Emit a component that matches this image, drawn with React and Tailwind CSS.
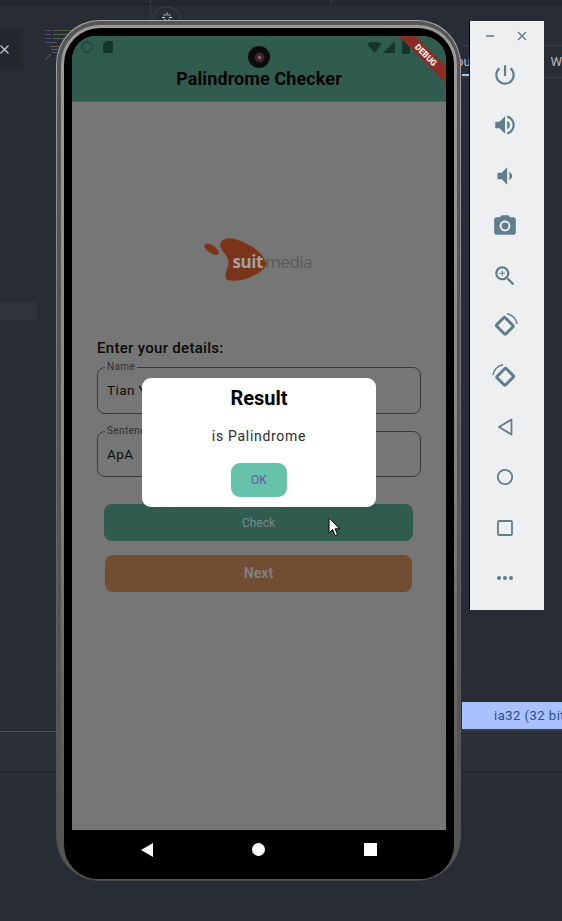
const ic = "#607d8b";

function Mat({ d, size = 26, children }) {
  return (
    <svg width={size} height={size} viewBox="0 0 24 24" fill={ic}>
      {d && <path d={d} fillRule="evenodd" />}
      {children}
    </svg>
  );
}

function Rotate({ flip }) {
  return (
    <svg width="26" height="26" viewBox="0 0 26 26" fill="none" stroke={ic} className={flip ? "-scale-x-100" : ""}>
      <rect x="6.2" y="7" width="13" height="12" rx="1.2" strokeWidth="3" transform="rotate(45 13 13)" />
      <path d="M15 0.8 A 12 12 0 0 1 25 11" strokeWidth="1.5" />
    </svg>
  );
}

function Toolbar() {
  return (
    <div className="absolute left-[469px] top-[21px] w-[75px] h-[589px] bg-[#eeeff0] flex flex-col items-center border-l border-black">
      <div className="w-full h-[30px] flex items-center justify-between pl-[16px] pr-[17px] shrink-0">
        <div className="w-[8px] h-[1.5px] bg-[#7f9aa6]" />
        <svg width="10" height="10" viewBox="0 0 10 10" stroke={ic} strokeWidth="1.4"><path d="M1 1l8 8M9 1l-8 8" /></svg>
      </div>
      <div className="flex flex-col items-center gap-[24.3px] pt-[11px] pr-[4px]">
        <Mat d="M13 3h-2v10h2V3zm4.83 2.17l-1.42 1.42C17.99 7.86 19 9.81 19 12c0 3.87-3.13 7-7 7s-7-3.13-7-7c0-2.19 1.01-4.14 2.58-5.42L6.17 5.17C4.23 6.82 3 9.26 3 12c0 4.97 4.03 9 9 9s9-4.03 9-9c0-2.74-1.23-5.18-3.17-6.83z" />
        <Mat d="M3 9v6h4l5 5V4L7 9H3zm13.5 3c0-1.77-1.02-3.29-2.5-4.03v8.05c1.48-.73 2.5-2.25 2.5-4.02zM14 3.23v2.06c2.89.86 5 3.54 5 6.71s-2.11 5.85-5 6.71v2.06c4.01-.91 7-4.49 7-8.77s-2.99-7.86-7-8.77z" />
        <Mat d="M18.5 12c0-1.77-1.02-3.29-2.5-4.03v8.05c1.48-.73 2.5-2.25 2.5-4.02zM5 9v6h4l5 5V4L9 9H5z" />
        <Mat d="M9 2L7.17 4H4c-1.1 0-2 .9-2 2v12c0 1.1.9 2 2 2h16c1.1 0 2-.9 2-2V6c0-1.1-.9-2-2-2h-3.17L15 2H9zm3 15c-2.76 0-5-2.24-5-5s2.24-5 5-5 5 2.24 5 5-2.24 5-5 5z">
          <circle cx="12" cy="12" r="3.2" />
        </Mat>
        <Mat d="M15.5 14h-.79l-.28-.27C15.41 12.59 16 11.11 16 9.5 16 5.91 13.09 3 9.5 3S3 5.91 3 9.5 5.91 16 9.5 16c1.61 0 3.09-.59 4.23-1.57l.27.28v.79l5 4.99L20.49 19l-4.99-5zm-6 0C7.01 14 5 11.99 5 9.5S7.01 5 9.5 5 14 7.01 14 9.5 11.99 14 9.5 14z">
          <path d="M12 10h-2v2H9v-2H7V9h2V7h1v2h2v1z" />
        </Mat>
        <Rotate />
        <Rotate flip />
        <svg width="26" height="26" viewBox="0 0 26 26" fill="none" stroke={ic} strokeWidth="1.8" strokeLinejoin="round"><path d="M19.5 5.5v15L7 13z" /></svg>
        <svg width="26" height="26" viewBox="0 0 26 26" fill="none" stroke={ic} strokeWidth="1.8"><circle cx="13" cy="13" r="7.2" /></svg>
        <svg width="26" height="26" viewBox="0 0 26 26" fill="none" stroke={ic} strokeWidth="1.8"><rect x="6" y="6" width="14" height="14" rx="1" /></svg>
        <svg width="26" height="26" viewBox="0 0 26 26" fill={ic}><circle cx="7" cy="13" r="2" /><circle cx="13" cy="13" r="2" /><circle cx="19" cy="13" r="2" /></svg>
      </div>
    </div>
  );
}

function Backdrop() {
  return (
    <div className="flex h-[921px] w-[562px] overflow-hidden bg-[#282c34]">
      <div className="w-[462px] flex flex-col shrink-0">
        <div className="h-[5px] bg-[#24282f] border-b border-[#1f2329] flex shrink-0">
          <div className="w-[151px] border-r border-[#3c4047]" />
          <div className="w-[181px] border-r border-[#3c4047]" />
        </div>
        <div className="flex h-[297px] shrink-0">
          <div className="w-[151px] border-r border-[#343841] h-[25px]" />
        </div>
        <div className="w-[37px] h-[18px] bg-[#2f333d] shrink-0" />
        <div className="h-[412px] shrink-0 border-b border-[#4a4e55]" />
        <div className="h-[40px] bg-[#2b2f37] border-b border-[#1f2329] shrink-0" />
      </div>
      <div className="flex-1 min-w-0 flex flex-col">
        <div className="h-[5px] bg-[#24282f] border-b border-[#1f2329] shrink-0" />
        <div className="h-[41px] shrink-0 border-b border-[#3a3e46]" />
        <div className="h-[32px] shrink-0 border-b border-[#3a3e46] flex items-center justify-between font-['Roboto',sans-serif] text-[13px] text-[#b9bcc1] relative">
          <span className="-ml-[6px]">ou</span>
          <span>W</span>
          <div className="absolute left-0 bottom-[1px] w-[10px] h-[2px] bg-[#a9c1ff]" />
        </div>
        <div className="h-[624px] shrink-0" />
        <div className="h-[28px] bg-[#a9c1ff] shrink-0 border-b border-[#3a3e46] flex items-center pl-[32px] font-['Roboto',sans-serif] text-[13px] tracking-[0.5px] text-[#2c4f86] whitespace-nowrap overflow-hidden">
          ia32 (32 bit)
        </div>
        <div className="h-[42px] bg-[#2b2f37] border-b border-[#1f2329] border-t border-t-[#3a3e46] shrink-0" />
      </div>
    </div>
  );
}

function Logo() {
  return (
    <div className="relative w-[112px] h-[46px]">
      <svg width="112" height="46" viewBox="0 0 112 46" className="absolute left-0 top-0">
        <path d="M17 4 C20 0 27 -1 34 2 C47 7 58 13 62 25 C63 29 58 33 53 36 C44 41 33 44 24 42 C21 41 21 37 23 31 C26 24 24 19 20 15 C17 11 15 7 17 4Z" fill="#7a3417" />
        <path d="M0.5 7.5 C1 5 6 5.5 10 8 C14 11 16 15 14 16.5 C11 18 6 15 3 12.5 C1 11 0 9 0.5 7.5Z" fill="#7a3417" />
      </svg>
      <div className="absolute left-[29px] top-[12px] flex items-baseline whitespace-nowrap font-['Open_Sans',sans-serif] text-[17px] leading-[24px]">
        <span className="font-bold text-[#a3a3a3] tracking-[-0.4px]">suit</span>
        <span className="text-[#5a5a5a] ml-[2px] tracking-[-0.5px]">media</span>
      </div>
    </div>
  );
}

function Field({ label, value, h }) {
  return (
    <div className={`relative ${h} rounded-[8px] border border-[#3a3a3a] flex items-center pl-[9px] text-[13.5px] tracking-[0.4px] text-[#0c0c0c]`}>
      <span className="absolute left-[7px] -top-[7px] bg-[#767676] px-[2px] text-[10px] leading-[12px] tracking-[0.4px] text-[#2f2f2f]">{label}</span>
      {value}
    </div>
  );
}

function Screen() {
  return (
    <div className="relative w-[374px] h-[794px] bg-[#767676] overflow-hidden rounded-t-[24px] font-['Roboto',sans-serif] flex flex-col">
      <div className="h-[66px] bg-[#305c50] shrink-0 border-b border-[#3e6a5e] relative">
        <div className="h-[20px] flex items-center justify-between pl-[9px] pr-[36px] pt-[2px]">
          <div className="flex items-center gap-[10px]">
            <div className="w-[12px] h-[12px] rounded-full border-[2px] border-[#1f4a40]" />
            <svg width="10" height="12" viewBox="0 0 10 12"><path d="M3.5 0H9a1 1 0 0 1 1 1v10a1 1 0 0 1-1 1H1a1 1 0 0 1-1-1V3.5z" fill="#16332c" /></svg>
          </div>
          <div className="flex items-center gap-[1px]">
            <svg width="15" height="11" viewBox="0 0 15 11"><path d="M0 1.5C4-.5 11-.5 15 1.5L7.5 11z" fill="#16332c" /></svg>
            <svg width="12" height="12" viewBox="0 0 12 12"><path d="M12 0v12H0z" fill="#16332c" /></svg>
            <div className="w-[8px] h-[13px] ml-[6px] bg-[#16332c] rounded-[1px]" />
          </div>
        </div>
        <div className="flex justify-center pt-[11px] text-[18px] leading-[24px] font-bold tracking-[0.1px] text-[#050505]">Palindrome Checker</div>
        <div className="absolute -right-[22px] top-[13px] w-[84px] h-[12px] bg-[#8b2c24] rotate-45 flex items-center justify-center">
          <span className="text-[8.5px] leading-[10px] font-bold text-white">DEBUG</span>
        </div>
      </div>

      <div className="flex justify-center pt-[136px] shrink-0"><div className="ml-[1px]"><Logo /></div></div>

      <div className="px-[25px] pt-[54px] flex flex-col shrink-0">
        <div className="text-[15px] leading-[20px] font-medium tracking-[0.3px] text-[#0a0a0a] mb-[9px]">Enter your details:</div>
        <Field label="Name" value="Tian Y" h="h-[47px]" />
        <div className="h-[17px]" />
        <Field label="Sentence" value="ApA" h="h-[46px]" />
        <div className="mt-[27px] ml-[7px] mr-[8px] h-[37px] rounded-[8px] bg-[#305c50] flex items-center justify-center text-[12px] text-[#7d8a86]">Check</div>
        <div className="mt-[13.5px] ml-[8px] mr-[9px] h-[37.5px] rounded-[8px] bg-[#714e31] flex items-center justify-center text-[14px] font-bold text-[#7f7f7f]">Next</div>
      </div>

      <div className="absolute left-[70px] top-[342px] w-[234px] h-[129px] bg-white rounded-[9px] flex flex-col items-center">
        <div className="text-[20px] leading-[24px] font-bold text-black mt-[8px]">Result</div>
        <div className="text-[14px] leading-[18px] tracking-[0.7px] text-[#2c2c2c] mt-[17px]">is Palindrome</div>
        <div className="mt-[18px] w-[56px] h-[34px] rounded-[9px] bg-[#66c2a8] flex items-center justify-center text-[12px] tracking-[0.2px] text-[#6a50ad]">OK</div>
      </div>
    </div>
  );
}

function Phone() {
  return (
    <div className="absolute left-[56px] top-[20px] w-[405px] h-[861px] rounded-[44px] bg-linear-to-b from-[#a8a8a8] via-[#707070] to-[#4a4a4a] p-[1px]">
      <div className="w-full h-full rounded-[43px] bg-[#555555] pt-[4px] pl-[4px] pr-[3px] pb-[1px]">
        <div className="w-full h-full rounded-[39px] bg-linear-to-b from-[#9c9c9c] via-[#858585] to-[#4f4f4f] pt-[3px] px-[3px]">
          <div className="w-full h-full rounded-t-[36px] rounded-b-[34px] bg-black pt-[8px] px-[8px] overflow-hidden">
            <Screen />
            <div className="h-[44px] bg-black flex items-start justify-between pt-[13px] px-[69px]">
              <svg width="12" height="14" viewBox="0 0 12 14"><path d="M12 0v14L0 7z" fill="#fff" /></svg>
              <div className="w-[13px] h-[13px] rounded-full bg-white" />
              <div className="w-[13px] h-[13px] bg-white" />
            </div>
          </div>
        </div>
      </div>
      <div className="absolute left-[192px] top-[26px] w-[22px] h-[22px] rounded-full bg-[#0b0b0b] flex items-center justify-center">
        <div className="w-[11px] h-[11px] rounded-full bg-[#3a2b2b] border border-[#191919] flex items-center justify-center">
          <div className="w-[3px] h-[3px] rounded-full bg-[#b565a5]" />
        </div>
      </div>
    </div>
  );
}

function Cursor() {
  return (
    <svg className="absolute left-[328px] top-[517px]" width="14" height="20" viewBox="0 0 14 20">
      <path d="M1 1v15l3.6-3.4 2.4 6 2.6-1-2.5-5.8H12z" fill="#fff" stroke="#000" strokeWidth="1" />
    </svg>
  );
}

function Extras() {
  const lines = [
    [45, 30, 6, "#8f5fc0"], [53, 30, 18, "#7f9f5f"], [45, 34, 6, "#8f5fc0"], [53, 34, 18, "#7f9f5f"],
    [45, 38, 6, "#8f5fc0"], [53, 38, 16, "#7f9f5f"], [45, 42, 12, "#5f8fcf"], [50, 46, 14, "#c09a5f"], [51, 49, 12, "#8a93a8"], [52, 52, 10, "#8a93a8"],
  ];
  return (
    <>
      <div className="absolute left-0 top-[30px] w-[21px] h-[38px] bg-[#24272e] shadow-[1px_1px_4px_rgba(0,0,0,0.15)] flex items-center justify-end pr-[12px]">
        <svg width="9" height="9" viewBox="0 0 9 9" stroke="#c6c8cc" strokeWidth="1.2"><path d="M0.5 0.5l8 8M8.5 0.5l-8 8" /></svg>
      </div>
      <svg className="absolute left-0 top-0" width="80" height="70">
        {lines.map(([x, y, w, c], i) => <rect key={i} x={x} y={y} width={w} height="1" fill={c} opacity="0.45" />)}
        <path d="M45 60l6-6" stroke="#5a6070" />
      </svg>
      <svg className="absolute left-[152px] top-[6px]" width="30" height="30" viewBox="0 0 30 30" fill="none">
        <circle cx="15" cy="15" r="14" stroke="#3b3f47" />
        <path d="M15 6.5v3M15 14v3M10 11.5h3M17 11.5h3M11.5 8l2 2M18.5 8l-2 2M11.5 15l2-2M18.5 15l-2-2" stroke="#d4d6da" />
      </svg>
    </>
  );
}

export default function App() {
  return (
    <div className="relative w-[562px] h-[921px] overflow-hidden">
      <Backdrop />
      <Extras />
      <Phone />
      <Toolbar />
      <Cursor />
    </div>
  );
}
